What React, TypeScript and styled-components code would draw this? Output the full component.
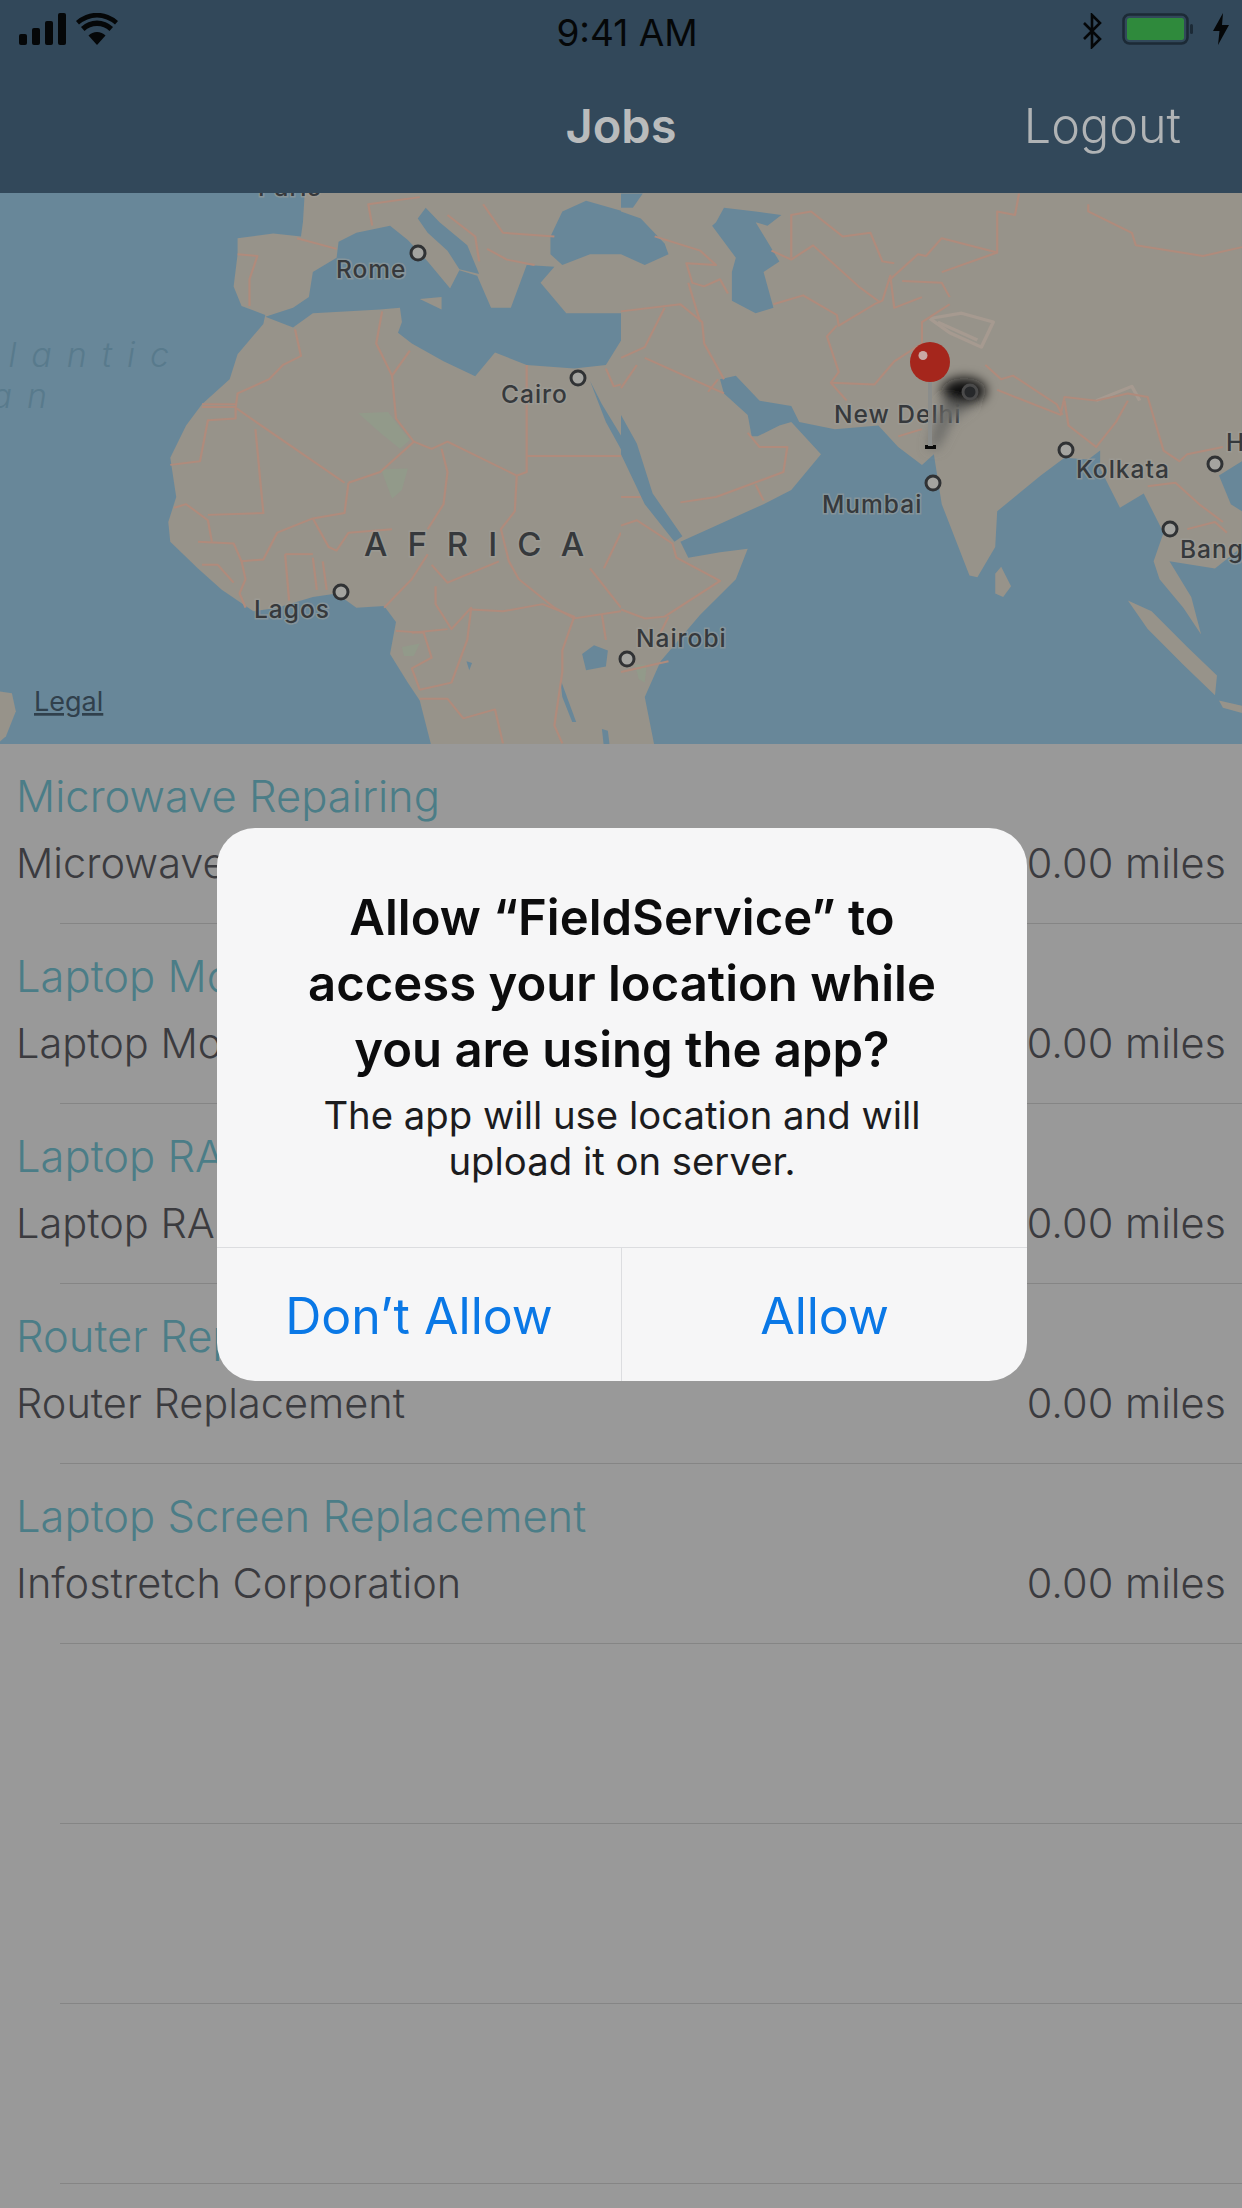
import React from "react";
import styled, { createGlobalStyle } from "styled-components";

const GlobalStyle = createGlobalStyle`
  html, body { margin: 0; padding: 0; background: #999999; }
  * { box-sizing: border-box; }
`;

type Job = { title: string; company: string };

const jobs: Job[] = [
  { title: "Microwave Repairing", company: "Microwave Repairing" },
  { title: "Laptop Motherboard", company: "Laptop Motherboard" },
  { title: "Laptop RAM", company: "Laptop RAM" },
  { title: "Router Replacement", company: "Router Replacement" },
  { title: "Laptop Screen Replacement", company: "Infostretch Corporation" },
];

const Page = styled.div`
  position: relative;
  width: 1242px;
  height: 2208px;
  overflow: hidden;
  background: #999999;
  font-family: Inter, "Liberation Sans", sans-serif;
`;
const Header = styled.header`
  height: 193px;
  background: #32485a;
  display: flex;
  flex-direction: column;
`;
const StatusBar = styled.div`
  height: 62px;
  padding: 13px 13px 0 19px;
  display: grid;
  grid-template-columns: 1fr auto 1fr;
  align-items: start;
`;
const StatusGroup = styled.div<{ $end?: boolean }>`
  display: flex;
  align-items: flex-start;
  justify-content: ${(p) => (p.$end ? "flex-end" : "flex-start")};
  gap: ${(p) => (p.$end ? "20px" : "10px")};
`;
const Clock = styled.span`
  color: #050708;
  font-size: 37px;
  line-height: 40px;
  font-weight: 400;
  margin-left: 6px;
`;
const NavBar = styled.nav`
  flex: 1;
  padding: 0 61px 4px 61px;
  display: grid;
  grid-template-columns: 1fr auto 1fr;
  align-items: center;
`;
const NavTitle = styled.h1`
  grid-column: 2;
  margin: 0;
  color: #b9bbbc;
  font-size: 47px;
  font-weight: 600;
`;
const NavAction = styled.span`
  justify-self: end;
  color: #b0b3b5;
  font-size: 48.5px;
  font-weight: 300;
`;
const MapFrame = styled.section`
  height: 551px;
  svg { display: block; }
`;
const MapLabel = styled.text<{ $ocean?: boolean; $region?: boolean }>`
  font-family: Inter, "Liberation Sans", sans-serif;
  font-size: ${(p) => (p.$ocean ? "34px" : p.$region ? "33px" : "24.5px")};
  font-weight: ${(p) => (p.$ocean ? 300 : 500)};
  font-style: ${(p) => (p.$ocean ? "italic" : "normal")};
  letter-spacing: ${(p) => (p.$ocean ? "15px" : p.$region ? "20px" : "1px")};
  fill: ${(p) => (p.$ocean ? "#587a8c" : "#36393c")};
  paint-order: stroke;
  stroke: ${(p) => (p.$ocean ? "none" : "rgba(160,160,155,0.55)")};
  stroke-width: 3px;
`;
const LegalLabel = styled.text`
  font-family: Inter, "Liberation Sans", sans-serif;
  font-size: 27px;
  fill: #30404c;
  text-decoration: underline;
`;
const JobList = styled.ul`
  margin: 0;
  padding: 0;
  list-style: none;
`;
const JobRow = styled.li`
  position: relative;
  height: 180px;
  padding: 27px 16px 0 16px;
  &::after {
    content: "";
    position: absolute;
    left: 60px;
    right: 0;
    bottom: 0;
    height: 1.5px;
    background: #858585;
  }
`;
const JobTitle = styled.div`
  color: #4b7d87;
  font-size: 43.5px;
  line-height: 50px;
  font-weight: 300;
`;
const JobMeta = styled.div`
  margin-top: 17px;
  display: flex;
  justify-content: space-between;
  color: #3b3b3f;
  font-size: 41.5px;
  line-height: 50px;
  font-weight: 300;
`;
const Dialog = styled.div`
  position: absolute;
  left: 217px;
  top: 828px;
  width: 810px;
  height: 553px;
  border-radius: 38px;
  background: #f6f6f7;
  display: flex;
  flex-direction: column;
`;
const DialogBody = styled.div`
  flex: 1;
  padding-top: 57px;
  text-align: center;
`;
const DialogTitle = styled.h2`
  margin: 0;
  color: #0c0c0d;
  font-size: 49px;
  line-height: 66px;
  font-weight: 600;
`;
const DialogMessage = styled.p`
  margin: 9px 0 0;
  color: #1c1c1e;
  font-size: 38.3px;
  line-height: 46px;
  font-weight: 400;
`;
const DialogActions = styled.div`
  height: 134px;
  display: grid;
  grid-template-columns: 1fr 1fr;
  border-top: 1.5px solid #dcdde0;
`;
const DialogButton = styled.button<{ $divided?: boolean }>`
  appearance: none;
  border: 0;
  padding: 2px 0 0;
  background: transparent;
  border-right: ${(p) => (p.$divided ? "1.5px solid #dcdde0" : "0")};
  color: #0a78e6;
  font-family: Inter, "Liberation Sans", sans-serif;
  font-size: 50px;
  font-weight: 400;
`;

const SignalIcon = () => (
  <svg width="47" height="32" viewBox="0 0 47 32" fill="#050708">
    <rect x="0" y="21" width="8" height="11" rx="2" />
    <rect x="13" y="15" width="8" height="17" rx="2" />
    <rect x="26" y="8" width="8" height="24" rx="2" />
    <rect x="39" y="0" width="8" height="32" rx="2" />
  </svg>
);
const WifiIcon = () => (
  <svg width="42" height="32" viewBox="0 0 42 32" fill="#050708">
    <path d="M21 32 L12.5 22.5 A12 12 0 0 1 29.5 22.5 Z" />
    <path d="M8.5 18 L5 14 A23 23 0 0 1 37 14 L33.5 18 A18 18 0 0 0 8.5 18 Z" />
    <path d="M3 11.5 L0 8 A31 31 0 0 1 42 8 L39 11.5 A27 27 0 0 0 3 11.5 Z" />
  </svg>
);
const BluetoothIcon = () => (
  <svg width="19" height="36" viewBox="0 0 19 36" fill="none" stroke="#050708" strokeWidth="2.6">
    <path d="M1 10 L17 26 L9 34 V2 L17 10 L1 26" />
  </svg>
);
const BatteryIcon = () => (
  <svg width="71" height="32" viewBox="0 0 71 32">
    <rect x="1.5" y="1.5" width="64" height="29" rx="6" fill="none" stroke="#1c2a36" strokeWidth="2.5" />
    <rect x="5" y="5" width="57" height="22" rx="2.5" fill="#2f8a3c" />
    <rect x="68" y="11" width="3" height="10" rx="1.5" fill="#1c2a36" />
  </svg>
);
const BoltIcon = () => (
  <svg width="16" height="32" viewBox="0 0 16 32" fill="#050708">
    <path d="M10 0 L0 18 H6.5 L5 32 L16 12 H9 Z" />
  </svg>
);

const westBorders = [
  "M600 180 L650 185 L630 250 L630 325",
  "M750 135 L850 165",
  "M745 390 L760 465 L715 490 L680 530 L600 570 L595 610 L660 660 L870 820",
  "M510 600 L595 600 M510 608 L595 608",
  "M595 610 L595 640 L525 645 L505 760 L430 770",
  "M645 670 L665 905 L525 910",
  "M880 820 L870 905 L790 920 L700 960 L665 1035 L610 1040 L590 990 L500 985",
  "M880 820 L960 790 L1045 705 L1090 725 L1130 705 L1305 800 L1330 790 L1330 490",
  "M965 340 L950 430 L990 520 L1000 640 L1045 705",
  "M990 520 L1035 450",
  "M1330 745 L1568 745",
  "M1115 725 L1130 790 L1120 880 L1080 950",
  "M1305 800 L1300 900 L1265 950 L1285 1040 L1310 1090 L1400 1170 L1450 1200 L1568 1180",
  "M1080 1020 L1040 1090 L970 1170",
  "M790 920 L830 1000 L850 1010 L880 960 L990 950",
  "M440 890 L470 880 L525 925 L535 985",
  "M510 1050 L550 1050 L590 1100",
  "M610 1040 L620 1090 L605 1130 L620 1170",
  "M720 1020 L730 1150",
  "M720 1020 L790 1020",
  "M790 1030 L800 1120 M815 1040 L825 1120",
  "M1190 1175 L1270 1180 L1370 1160 L1450 1195 L1420 1290 L1420 1350",
  "M1090 1050 L1130 1100 L1260 1040",
  "M1100 1110 L1100 1160 L1140 1230 L1190 1170 L1180 1260 L1140 1380 L1060 1400",
  "M1040 1240 L1130 1230",
  "M1000 1235 L1070 1240 L1090 1310 L1040 1340 L1060 1400",
  "M1060 1425 L1130 1425 L1170 1480 L1250 1455 L1270 1550",
  "M1520 1190 L1530 1260",
  "M1490 1060 L1568 1170",
  "M1525 1060 L1568 960",
  "M1420 1350 L1400 1500 L1420 1550",
  "M1060 20 L930 40 L940 100",
  "M1220 40 L1270 120 L1400 130",
  "M1130 70 L1200 130 L1210 200",
  "M1350 210 L1280 195 L1230 165",
  "M1530 500 L1550 550 L1568 545",
];

const eastBorders = [
  "M0 340 L150 320 L205 370 L210 430 L260 530",
  "M85 130 L200 170 L240 210 L165 205 L180 260 L210 270 L250 250 L270 290",
  "M170 260 L200 370",
  "M385 320 L460 295 L545 350 L550 380 L640 320 L660 310 L680 240 L690 330 L760 300",
  "M430 190 L430 70 L480 60 L560 130 L630 120 L660 200 L690 205",
  "M380 170 L430 195 L485 155 L600 270 L655 315",
  "M675 255 L750 180 L770 185 L810 135 L950 175 L950 60 L995 70 L1005 10",
  "M810 230 L950 175",
  "M710 255 L810 260 L830 300",
  "M545 380 L520 410 L550 510 L530 540 L570 590",
  "M530 540 L640 545 L690 480 L760 430 L760 370 L830 320",
  "M0 470 L60 440 L110 330",
  "M60 470 L260 570",
  "M0 555 L40 490",
  "M220 565 L245 530",
  "M320 680 L350 720 L420 720 L410 790 L240 860 L150 875",
  "M340 825 L360 870",
  "M0 860 L50 860 M0 940 L40 925 L130 990 L140 1030 L250 1095 L110 1195 L60 1200 L0 1175",
  "M120 1195 L100 1240",
  "M120 1320 L0 1350",
  "M920 490 L960 530 L990 520 L1100 600 L1115 630",
  "M950 560 L1110 630 L1120 580 L1200 590 L1280 570 L1330 580 L1370 730 L1410 760 L1430 740 L1520 720",
  "M1120 590 L1130 660 L1200 720 L1250 650 L1280 590",
  "M1180 40 L1180 60 L1290 120 L1300 155 L1470 185 L1568 160",
  "M1330 830 L1400 820 L1460 880 L1520 930",
  "M1430 950 L1500 930 L1530 960",
  "M700 690 L760 670",
];

const paleEastBorders = [
  "M780 360 L860 345 L940 370 L910 440 L830 400 L780 360",
  "M1200 590 L1290 550 L1310 590",
  "M800 370 L900 420",
];

const cities: [number, number][] = [
  [418, 253],
  [578, 378],
  [341, 592],
  [933, 483],
  [1066, 450],
  [1215, 464],
  [1170, 529],
  [627, 659],
];

const WorldMap = () => (
  <svg width="1242" height="551" viewBox="0 193 1242 551">
    <defs>
      <filter id="pinShadow" x="-50%" y="-50%" width="200%" height="200%">
        <feGaussianBlur stdDeviation="6" />
      </filter>
      <filter id="mapSoft" x="0" y="0" width="100%" height="100%">
        <feGaussianBlur stdDeviation="0.7" />
      </filter>
    </defs>
    <rect x="0" y="193" width="1242" height="551" fill="#688799" />
    {/* west half, traced in crop coordinates */}
    <g filter="url(#mapSoft)">
      <g transform="translate(0 190) scale(0.396 0.357)">
        <path
          fill="#97938a"
          d="M770 0 L765 90 L760 130 L690 122 L600 135 L600 180 L590 270 L610 325 L670 350 L665 375 L600 460 L580 530 L510 600 L470 660 L430 750 L445 860 L425 930 L430 985 L500 1060 L560 1120 L640 1180 L700 1170 L790 1140 L850 1130 L900 1170 L970 1165 L1000 1210 L985 1300 L1030 1380 L1060 1430 L1090 1560 L1575 1560 L1575 0 Z"
        />
        <path
          fill="#688799"
          d="M670 355 L740 385 L790 345 L870 340 L960 335 L1010 330 L1015 370 L1005 400 L1040 430 L1120 480 L1200 522 L1250 455 L1330 490 L1450 500 L1530 490 L1575 410 L1575 345 L1430 345 L1365 260 L1400 215 L1330 210 L1290 330 L1240 330 L1205 240 L1160 225 L1130 290 L1140 280 L1080 200 L1030 140 L985 100 L900 120 L855 145 L850 190 L790 230 L780 300 L740 330 Z"
        />
        <path fill="#97938a" d="M1060 305 L1115 300 L1115 335 Z" />
        <path fill="#688799" d="M1055 80 L1075 50 L1110 90 L1180 155 L1210 235 L1160 222 L1130 170 L1080 120 Z" />
        <path fill="#688799" d="M1390 130 L1420 60 L1480 30 L1575 60 L1575 180 L1490 180 L1420 210 L1390 180 Z" />
        <path fill="#688799" d="M1490 535 L1520 600 L1575 700 L1575 740 L1530 650 Z" />
        <path fill="#688799" d="M1470 1300 L1500 1275 L1535 1290 L1530 1335 L1480 1345 Z" />
        <path fill="#688799" d="M1415 1370 L1425 1400 L1455 1490 L1445 1490 L1420 1420 Z" />
        <path fill="#688799" d="M1520 1510 L1535 1515 L1540 1560 L1525 1560 Z" />
        <path fill="#688799" d="M1178 1320 L1192 1325 L1185 1345 Z" />
        <path fill="#97938a" d="M0 1405 L30 1410 L40 1460 L15 1530 L0 1545 Z" />
        <g fill="#929a8a">
          <path d="M905 625 L980 622 L1035 700 L1010 725 L960 680 Z" />
          <path d="M962 782 L1030 780 L1015 840 L990 865 Z" />
          <path d="M1015 1280 L1060 1270 L1045 1305 L1020 1305 Z" />
        </g>
        <g fill="none" stroke="#b08b7c" strokeWidth="5.5" strokeLinejoin="round">
          {westBorders.map((d) => (
            <path key={d} d={d} />
          ))}
        </g>
      </g>
      {/* east half */}
      <g transform="translate(621 190) scale(0.396 0.357)">
        <rect x="0" y="0" width="1568" height="1560" fill="#97938a" />
        <path
          fill="#688799"
          d="M85 1560 L60 1420 L100 1320 L200 1190 L290 1090 L320 1005 L250 1015 L170 1030 L150 985 L220 950 L360 880 L430 840 L505 740 L430 650 L400 660 L345 690 L330 690 L320 630 L260 570 L250 530 L290 520 L350 590 L430 605 L450 650 L540 670 L650 660 L700 720 L760 770 L790 740 L810 880 L880 1080 L900 1085 L945 1000 L950 900 L1060 800 L1120 750 L1180 755 L1210 730 L1210 780 L1260 890 L1320 850 L1370 960 L1345 1040 L1360 1090 L1420 1170 L1465 1245 L1440 1140 L1385 1040 L1500 1060 L1568 1000 L1568 1560 Z"
        />
        <path fill="#688799" d="M1568 760 L1510 800 L1540 880 L1568 900 Z" />
        <path fill="#688799" d="M0 60 L50 80 L110 150 L120 180 L60 210 L0 180 Z" />
        <path fill="#688799" d="M0 10 L55 10 L30 50 L0 50 Z" />
        <path fill="#688799" d="M240 90 L260 50 L340 60 L405 70 L370 100 L340 90 L400 200 L360 230 L385 330 L340 345 L280 310 L280 230 L290 190 L230 100 Z" />
        <path fill="#688799" d="M0 630 L40 710 L80 850 L155 970 L135 985 L60 880 L0 740 Z" />
        <path fill="#97938a" d="M1280 1150 L1340 1180 L1430 1280 L1505 1360 L1500 1415 L1420 1330 L1330 1230 Z" />
        <path fill="#97938a" d="M1510 1430 L1568 1445 L1568 1465 L1520 1450 Z" />
        <path fill="#97938a" d="M945 1075 L960 1055 L985 1110 L965 1140 L945 1130 Z" />
        <g fill="#929a8a">
          <path d="M35 1330 L65 1330 L60 1380 L45 1370 Z" />
        </g>
        <g fill="none" stroke="#a69a90" strokeWidth="9" strokeLinejoin="round">
          {paleEastBorders.map((d) => (
            <path key={d} d={d} />
          ))}
        </g>
        <g fill="none" stroke="#b08b7c" strokeWidth="5.5" strokeLinejoin="round">
          {eastBorders.map((d) => (
            <path key={d} d={d} />
          ))}
        </g>
      </g>
    </g>
    <g>
      <MapLabel x="258" y="196">Paris</MapLabel>
      <MapLabel x="336" y="278">Rome</MapLabel>
      <MapLabel x="501" y="403">Cairo</MapLabel>
      <MapLabel x="254" y="618">Lagos</MapLabel>
      <MapLabel x="834" y="423">New Delhi</MapLabel>
      <MapLabel x="822" y="513">Mumbai</MapLabel>
      <MapLabel x="1076" y="478">Kolkata</MapLabel>
      <MapLabel x="1180" y="558">Bangkok</MapLabel>
      <MapLabel x="636" y="647">Nairobi</MapLabel>
      <MapLabel x="1226" y="451">Hanoi</MapLabel>
      <MapLabel $region x="364" y="556">AFRICA</MapLabel>
      <MapLabel $ocean x="184" y="367" textAnchor="end">Atlantic</MapLabel>
      <MapLabel $ocean x="62" y="408" textAnchor="end">Ocean</MapLabel>
      <LegalLabel x="34" y="711">Legal</LegalLabel>
    </g>
    <g fill="#a4a4a0" stroke="#303234" strokeWidth="3">
      {cities.map(([x, y]) => (
        <circle key={x} cx={x} cy={y} r="7" />
      ))}
    </g>
    <g filter="url(#pinShadow)">
      <path d="M928 448 L940 410 L950 388 L972 380 L985 392 L972 405 L952 420 L938 448 Z" fill="#6a6a68" />
      <ellipse cx="964" cy="391" rx="22" ry="13" fill="#0c0c0c" />
    </g>
    <circle cx="970" cy="392" r="7" fill="#26282a" stroke="#4a4a4a" strokeWidth="3" />
    <rect x="928" y="380" width="4" height="66" fill="#8b8d8b" />
    <path d="M925 445 V449 H936 V445 H933 V446 H928 V445 Z" fill="#0a0a0a" />
    <circle cx="930" cy="362" r="20" fill="#a5261c" />
    <circle cx="923" cy="355.5" r="4.5" fill="#c9a9a4" />
  </svg>
);

export default function App() {
  return (
    <Page>
      <GlobalStyle />
      <Header>
        <StatusBar>
          <StatusGroup>
            <SignalIcon />
            <WifiIcon />
          </StatusGroup>
          <Clock>9:41 AM</Clock>
          <StatusGroup $end>
            <BluetoothIcon />
            <BatteryIcon />
            <BoltIcon />
          </StatusGroup>
        </StatusBar>
        <NavBar>
          <NavTitle>Jobs</NavTitle>
          <NavAction>Logout</NavAction>
        </NavBar>
      </Header>
      <MapFrame>
        <WorldMap />
      </MapFrame>
      <JobList>
        {jobs.map((job) => (
          <JobRow key={job.title}>
            <JobTitle>{job.title}</JobTitle>
            <JobMeta>
              <span>{job.company}</span>
              <span>0.00 miles</span>
            </JobMeta>
          </JobRow>
        ))}
        <JobRow />
        <JobRow />
        <JobRow />
      </JobList>
      <Dialog>
        <DialogBody>
          <DialogTitle>
            Allow “FieldService” to
            <br />
            access your location while
            <br />
            you are using the app?
          </DialogTitle>
          <DialogMessage>
            The app will use location and will
            <br />
            upload it on server.
          </DialogMessage>
        </DialogBody>
        <DialogActions>
          <DialogButton $divided>Don’t Allow</DialogButton>
          <DialogButton>Allow</DialogButton>
        </DialogActions>
      </Dialog>
    </Page>
  );
}
